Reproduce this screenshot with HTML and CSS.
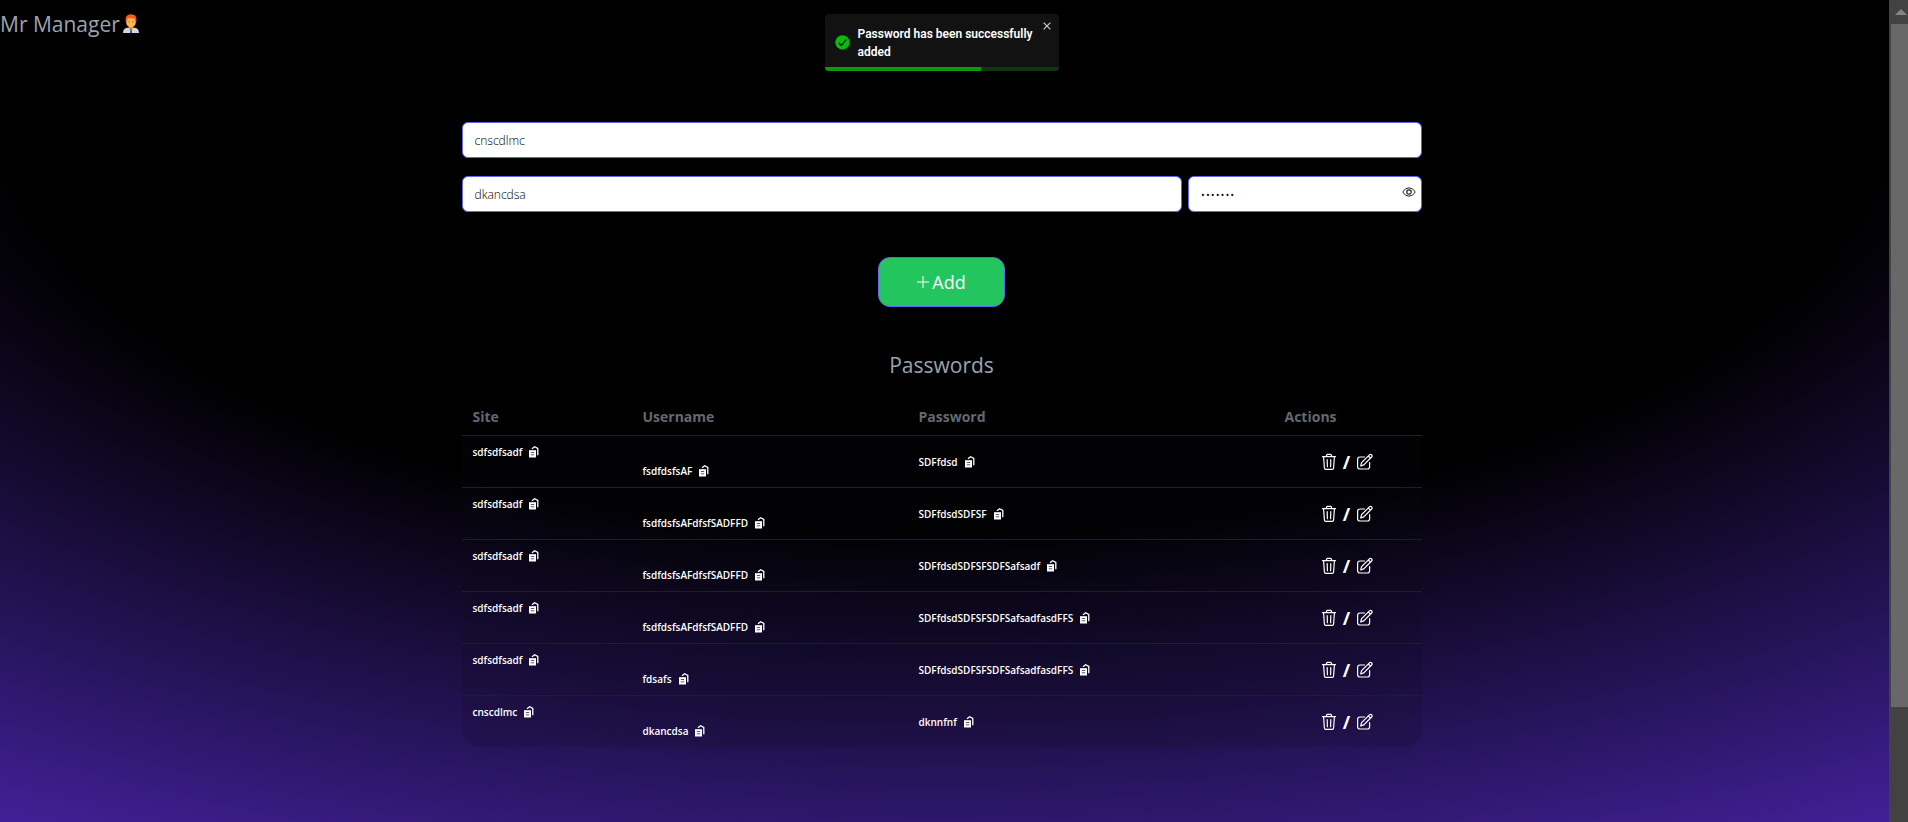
FILE: index.html
```html
<!DOCTYPE html>
<html lang="en">
<head>
<meta charset="utf-8">
<title>Mr Manager</title>
<link rel="stylesheet" href="styles.css">
</head>
<body>
<svg class="sprite" aria-hidden="true">
  <symbol id="copy" viewBox="0 0 10 12">
    <path d="M0 4.200h7v7.300H0z" fill="currentColor"/>
    <path d="M3 2.800L5.600.8 8.800 2.500v6.800" fill="none" stroke="currentColor" stroke-width="1.300"/>
    <path d="M1.800 6.500h3.400M1.800 8.800h3.400" stroke="#17121f" stroke-width=".7"/>
  </symbol>
  <symbol id="trash" viewBox="0 0 16 18">
    <path d="M1.500 3.600h13M5 3.400l1-2h4l1 2M2.600 4l.8 11q.1 1.300 1.400 1.300h6.400q1.300 0 1.400-1.300L13.400 4M6.200 6.500l.2 7.200M9.800 6.500l-.2 7.200" fill="none" stroke="currentColor" stroke-width="1.200" stroke-linecap="round" stroke-linejoin="round"/>
  </symbol>
  <symbol id="edit" viewBox="0 0 18 18">
    <path d="M8.500 4H4Q1.600 4 1.600 6.400v7.400Q1.600 16 4 16h7.400q2.200 0 2.200-2.200V9.500M4.700 13l.9-3.400L13.400 1.800q1-1 2.100 0t.1 2.200L7.800 11.900zM12.300 3l2.200 2.200" fill="none" stroke="currentColor" stroke-width="1.200" stroke-linecap="round" stroke-linejoin="round"/>
  </symbol>
</svg>
<div class="page">
  <header class="navbar">
    <span>Mr Manager</span>
    <svg class="avatar" viewBox="0 0 16 20" aria-hidden="true">
      <path d="M0 19q0-4.600 4.500-5.200h7q4.500.6 4.500 5.200z" fill="#cfd8dc"/>
      <path d="M5.700 11h4.600v3.200L8 16l-2.300-1.800z" fill="#ff9800"/>
      <path d="M7.400 14.800h1.200l.5 4.200H6.900z" fill="#3f51b5"/>
      <rect x="3.200" y="3" width="9.600" height="10" rx="4.500" fill="#ffb74d"/>
      <path d="M2.600 8V4.600Q2.900.3 8.300.2q5 .3 5.100 4.500V8l-1.300-1.700-.5-1.700-5.500-.8-2 2z" fill="#ff5722"/>
      <path d="M5.600 8h1M9.400 8h1" stroke="#784719"/>
    </svg>
  </header>
  <main class="manager">
    <form class="entry">
      <input class="field" type="text" aria-label="Site" value="cnscdlmc">
      <div class="credentials">
        <input class="field" type="text" aria-label="Username" value="dkancdsa">
        <div class="secret">
          <input class="field password" type="password" aria-label="Password" value="dknnfnf">
          <button class="reveal" type="button" aria-label="Show password">
            <svg viewBox="0 0 14 10"><path d="M.7 5Q3.200.8 7 .8T13.300 5Q10.800 9.200 7 9.200T.7 5z" fill="none" stroke="#222"/><circle cx="7" cy="5" r="2.200" fill="none" stroke="#222" stroke-width="1.200"/></svg>
          </button>
        </div>
      </div>
      <button class="add" type="button"><svg viewBox="0 0 12 12" aria-hidden="true"><path d="M6 0v12M0 6h12" stroke="#fff"/></svg>Add</button>
    </form>
    <h2 class="title">Passwords</h2>
    <table class="vault">
      <colgroup><col class="c-site"><col class="c-user"><col class="c-pass"><col class="c-act"></colgroup>
      <thead><tr><th>Site</th><th>Username</th><th>Password</th><th>Actions</th></tr></thead>
      <tbody id="rows"></tbody>
    </table>
  </main>
  <div class="toast" role="alert">
    <div class="toast-body">
      <svg class="tick" viewBox="0 0 16 16" aria-hidden="true"><circle cx="8" cy="8" r="7.700" fill="#07bc0c"/><path d="M4 8.500l2.700 2.700L12 5" fill="none" stroke="#121212" stroke-width="1.400"/></svg>
      <p>Password has been successfully added</p>
      <button class="close" type="button" aria-label="Close"><svg viewBox="0 0 8 8"><path d="M.6.6l6.800 6.800M7.400.6L.6 7.400" stroke="#c4c4c4" stroke-width="1.300"/></svg></button>
    </div>
    <div class="progress"><div class="progress-fill"></div></div>
  </div>
</div>
<aside class="scrollbar" aria-hidden="true">
  <svg class="arrow" viewBox="0 0 12 6"><path d="M6 0l6 6H0z" fill="#868686"/></svg>
  <div class="thumb"></div>
  <div class="track"></div>
</aside>
<script src="rows.js"></script>
</body>
</html>
```
FILE: styles.css
```css
* { box-sizing: border-box; }
body {
  margin: 0;
  display: flex;
  height: 100vh;
  overflow: hidden;
  background: #000;
  font-family: "Open Sans", "Noto Sans", sans-serif;
  color: #fff;
}
button { font: inherit; color: inherit; background: none; border: 0; padding: 0; cursor: pointer; }
svg { display: block; flex: none; }
.sprite { display: none; }
.page {
  position: relative;
  flex: 1;
  padding-right: 6px;
  background: radial-gradient(125% 131% at 50% 12%, #000 40%, #63e 100%);
}
.navbar {
  display: flex;
  align-items: center;
  gap: 3px;
  height: 47px;
  font-size: 21px;
  color: #9ca3af;
}
.avatar { width: 16px; height: 20px; }
.manager { width: 960px; max-width: 100%; margin: 0 auto; padding-top: 75px; }
.entry { display: flex; flex-direction: column; gap: 18px; }
.field {
  width: 100%;
  height: 36px;
  padding: 0 12px;
  border: 1px solid #6366f1;
  border-radius: 6px;
  background: #fff;
  color: #000;
  font-family: inherit;
  font-size: 12px;
  font-weight: 300;
}
.password { padding-top: 2px; font-size: 13px; }
.credentials { display: grid; grid-template-columns: 1fr 234px; gap: 6px; }
.secret { position: relative; }
.reveal { position: absolute; right: 6px; top: 11px; }
.reveal svg { width: 14px; height: 10px; }
.add {
  display: flex;
  align-items: center;
  justify-content: center;
  gap: 3px;
  align-self: center;
  width: 127px;
  height: 50px;
  margin-top: 27px;
  border: 1px solid #6366f1;
  border-radius: 12px;
  background: #22c55e;
  font-size: 18px;
}
.add svg { width: 12px; height: 12px; }
.title {
  margin: 42px 0 0;
  font-size: 21px;
  line-height: 32px;
  font-weight: 400;
  text-align: center;
  color: #9ca3af;
}
.vault { width: 100%; margin-top: 16px; table-layout: fixed; border-collapse: separate; border-spacing: 0; }
.c-site { width: 170px; }
.c-user { width: 276px; }
.c-act { width: 148px; }
.vault th {
  height: 38px;
  padding: 0 11px;
  text-align: left;
  font-size: 14px;
  font-weight: 700;
  color: #646874;
}
.vault td {
  height: 52px;
  padding: 8px 11px;
  border-top: 1px solid #1d1e26;
  background: rgba(10, 10, 24, .16);
  font-size: 10px;
  line-height: 16px;
  font-weight: 700;
}
.vault td:nth-child(1) { vertical-align: top; }
.vault td:nth-child(2) { vertical-align: bottom; }
.vault tr:last-child td:first-child { border-bottom-left-radius: 18px; }
.vault tr:last-child td:last-child { border-bottom-right-radius: 18px; }
.value { display: flex; align-items: center; gap: 7px; font-weight: 600; }
.value svg { width: 10px; height: 12px; }
.actions { display: flex; align-items: center; justify-content: center; gap: 6px; font-size: 18px; }
.actions svg { width: 16px; height: 18px; }
.actions button:last-child svg { width: 18px; }
.toast {
  position: absolute;
  top: 14px;
  left: 50%;
  width: 234px;
  margin-left: -120px;
  border-radius: 4px;
  overflow: hidden;
  background: #121212;
  font-family: Roboto, "Liberation Sans", sans-serif;
  font-size: 12px;
  line-height: 18px;
  font-weight: 600;
}
.toast-body { display: flex; align-items: center; gap: 8px; height: 53px; padding: 4px 10px 0; }
.toast p { flex: 1; margin: 0; }
.tick { width: 15px; height: 15px; }
.close { align-self: flex-start; margin: 4px -2px 0 -4px; }
.close svg { width: 8px; height: 8px; }
.progress { height: 4px; background: #103513; }
.progress-fill { width: 67%; height: 100%; background: #079a0c; }
.scrollbar { display: flex; flex-direction: column; width: 19px; background: #424242; }
.arrow { width: 12px; height: 6px; margin: 9px 0 9px 6px; }
.thumb { flex: 683; margin-left: 2px; background: #686868; }
.track { flex: 115; }
```
FILE: rows.js
```javascript
const entries = [
  ["sdfsdfsadf", "fsdfdsfsAF", "SDFfdsd"],
  ["sdfsdfsadf", "fsdfdsfsAFdfsfSADFFD", "SDFfdsdSDFSF"],
  ["sdfsdfsadf", "fsdfdsfsAFdfsfSADFFD", "SDFfdsdSDFSFSDFSafsadf"],
  ["sdfsdfsadf", "fsdfdsfsAFdfsfSADFFD", "SDFfdsdSDFSFSDFSafsadfasdFFS"],
  ["sdfsdfsadf", "fdsafs", "SDFfdsdSDFSFSDFSafsadfasdFFS"],
  ["cnscdlmc", "dkancdsa", "dknnfnf"]
];
const icon = (id, label) =>
  `<button type="button" aria-label="${label}"><svg><use href="#${id}"/></svg></button>`;
document.getElementById("rows").innerHTML = entries.map(entry =>
  "<tr>" +
  entry.map(v => `<td><div class="value"><span>${v}</span>${icon("copy", "Copy")}</div></td>`).join("") +
  `<td><div class="actions">${icon("trash", "Delete")}<span>/</span>${icon("edit", "Edit")}</div></td></tr>`
).join("");
```
